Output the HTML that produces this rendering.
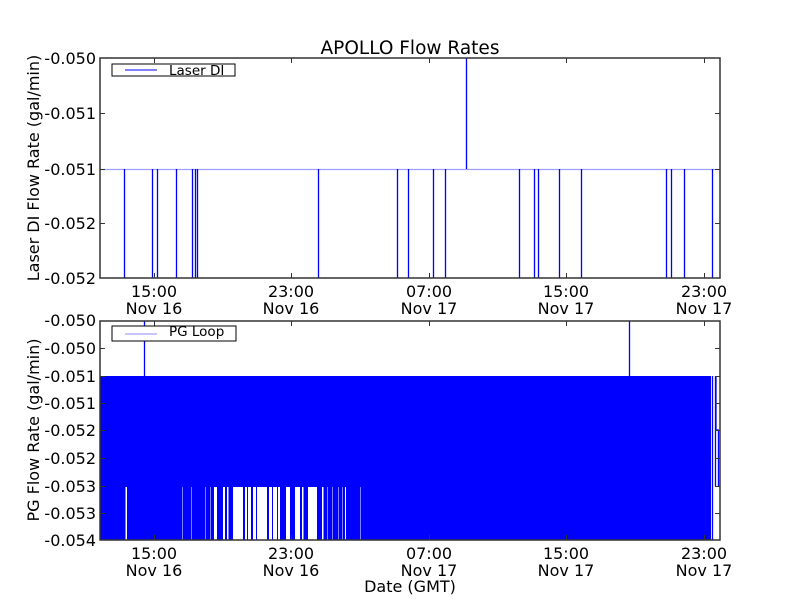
<!DOCTYPE html>
<html><head><style>
html,body{margin:0;padding:0;background:#fff;}
svg{display:block;font-family:"DejaVu Sans","Liberation Sans",sans-serif;}
</style></head><body>
<svg width="800" height="600" viewBox="0 0 800 600" xmlns="http://www.w3.org/2000/svg">
<rect width="800" height="600" fill="#fff"/>
<text x="410" y="54" font-size="18.5" text-anchor="middle">APOLLO Flow Rates</text>

<!-- TOP AXES -->
<g stroke="#0000ff" stroke-width="1.3">
<line x1="100" y1="169.5" x2="720" y2="169.5" stroke="#a0a0ff"/>
<path d="M124.5 169V278M152.5 169V278M157.5 169V278M176.5 169V278M192.5 169V278M195.5 169V278M197.5 169V278M318.5 169V278M397.5 169V278M408.5 169V278M433.5 169V278M445.5 169V278M519.5 169V278M534.5 169V278M538.5 169V278M559.5 169V278M581.5 169V278M666.5 169V278M671.5 169V278M684.5 169V278M712.5 169V278M466.5 58V169"/>
</g>
<rect x="100" y="58" width="620" height="220" fill="none" stroke="#333" stroke-width="1.5"/>
<g stroke="#333" stroke-width="1">
<path d="M100 113.5h5M100 169.5h5M100 223.5h5M715 113.5h5M715 169.5h5M715 223.5h5"/>
<path d="M154.5 278v-5M291.5 278v-5M429.5 278v-5M566.5 278v-5M704.5 278v-5M154.5 58v5M291.5 58v5M429.5 58v5M566.5 58v5M704.5 58v5"/>
</g>
<rect x="112" y="64" width="123" height="12" fill="#fff" stroke="#000" stroke-width="1"/>
<line x1="125" y1="70" x2="157" y2="70" stroke="#0000ff" stroke-width="1"/>
<text x="169" y="75" font-size="13.5">Laser DI</text>
<g font-size="16" text-anchor="end">
<text x="96" y="64">-0.050</text><text x="96" y="119">-0.051</text><text x="96" y="175">-0.051</text><text x="96" y="229">-0.052</text><text x="96" y="284">-0.052</text>
</g>
<g font-size="16" text-anchor="middle">
<text x="154" y="297">15:00</text><text x="154" y="314">Nov 16</text>
<text x="291" y="297">23:00</text><text x="291" y="314">Nov 16</text>
<text x="429" y="297">07:00</text><text x="429" y="314">Nov 17</text>
<text x="566" y="297">15:00</text><text x="566" y="314">Nov 17</text>
<text x="704" y="297">23:00</text><text x="704" y="314">Nov 17</text>
</g>
<text transform="translate(39,168) rotate(-90)" font-size="16" text-anchor="middle">Laser DI Flow Rate (gal/min)</text>

<!-- BOTTOM AXES -->
<rect x="100" y="376" width="611" height="164" fill="#0000ff"/>
<g fill="#fff">
<rect x="125.5" y="487" width="1.5" height="53"/>
<rect x="182" y="487" width="1" height="53" fill="#8080ff"/>
<rect x="191" y="487" width="1" height="53" fill="#8080ff"/>
<rect x="205" y="487" width="1" height="53" fill="#8080ff"/>
<rect x="210" y="487" width="1" height="53" fill="#8080ff"/>
<rect x="214" y="487" width="1.5" height="53"/>
<rect x="215" y="487" width="2" height="53"/>
<rect x="223" y="487" width="2" height="53"/>
<rect x="227" y="487" width="1.5" height="53"/>
<rect x="233" y="487" width="10" height="53"/>
<rect x="245" y="487" width="2" height="53"/>
<rect x="248" y="487" width="3" height="53"/>
<rect x="253" y="487" width="3" height="53"/>
<rect x="257" y="487" width="10" height="53"/>
<rect x="269" y="487" width="3" height="53"/>
<rect x="273" y="487" width="4" height="53"/>
<rect x="278" y="487" width="2" height="53"/>
<rect x="286" y="487" width="4" height="53"/>
<rect x="295" y="487" width="5" height="53"/>
<rect x="302" y="487" width="1.5" height="53"/>
<rect x="308" y="487" width="9" height="53"/>
<rect x="322" y="487" width="1.5" height="53"/>
<rect x="327" y="487" width="1" height="53" fill="#8080ff"/>
<rect x="332" y="487" width="1" height="53" fill="#8080ff"/>
<rect x="338" y="487" width="1" height="53" fill="#8080ff"/>
<rect x="342" y="487" width="1" height="53" fill="#8080ff"/>
<rect x="345" y="487" width="1" height="53"/>
<rect x="360" y="487" width="1" height="53" fill="#8080ff"/>
</g>
<g stroke="#0000ff" stroke-width="1.3" fill="none">
<path d="M144.5 321V376M629.5 321V376"/>
<path d="M712.5 376V540M715.5 376V486M715.5 430h3V486M716 430V376"/>
</g>
<rect x="100" y="321" width="620" height="219" fill="none" stroke="#333" stroke-width="1.5"/>
<g stroke="#333" stroke-width="1">
<path d="M100 348.5h5M100 376.5h5M100 403.5h5M100 430.5h5M100 458.5h5M100 486.5h5M100 513.5h5M715 348.5h5M715 376.5h5M715 403.5h5M715 430.5h5M715 458.5h5M715 486.5h5M715 513.5h5"/>
<path d="M154.5 540v-5M291.5 540v-5M429.5 540v-5M566.5 540v-5M704.5 540v-5M154.5 321v5M291.5 321v5M429.5 321v5M566.5 321v5M704.5 321v5"/>
</g>
<rect x="112" y="326" width="124" height="15" fill="#fff" stroke="#000" stroke-width="1"/>
<line x1="125" y1="334" x2="157" y2="334" stroke="#a0a0ff" stroke-width="1.3"/>
<text x="169" y="336" font-size="13.5">PG Loop</text>
<g font-size="16" text-anchor="end">
<text x="96" y="326">-0.050</text><text x="96" y="354">-0.050</text><text x="96" y="382">-0.051</text><text x="96" y="409">-0.051</text><text x="96" y="436">-0.052</text><text x="96" y="464">-0.052</text><text x="96" y="492">-0.053</text><text x="96" y="519">-0.053</text><text x="96" y="546">-0.054</text>
</g>
<g font-size="16" text-anchor="middle">
<text x="154" y="559">15:00</text><text x="154" y="576">Nov 16</text>
<text x="291" y="559">23:00</text><text x="291" y="576">Nov 16</text>
<text x="429" y="559">07:00</text><text x="429" y="576">Nov 17</text>
<text x="566" y="559">15:00</text><text x="566" y="576">Nov 17</text>
<text x="704" y="559">23:00</text><text x="704" y="576">Nov 17</text>
</g>
<text x="410" y="592" font-size="16" text-anchor="middle">Date (GMT)</text>
<text transform="translate(39,430) rotate(-90)" font-size="16" text-anchor="middle">PG Flow Rate (gal/min)</text>
</svg>
</body></html>
